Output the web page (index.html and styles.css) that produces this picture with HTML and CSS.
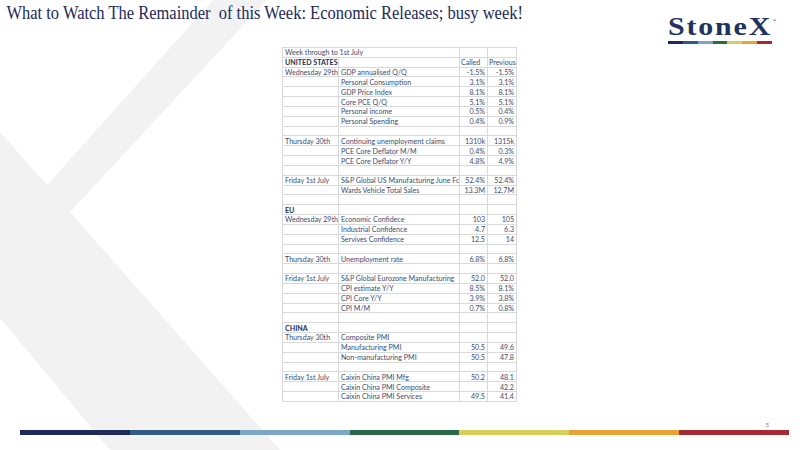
FILE: index.html
```html
<!DOCTYPE html>
<html>
<head>
<meta charset="utf-8">
<link rel="stylesheet" href="styles.css">
</head>
<body>
<div class="slide">
  <svg class="chevron" width="800" height="450" viewBox="0 0 800 450" aria-hidden="true">
    <polygon points="0,132 47,185 213,0 267,0 70,212 280,450 110,450 0,318" fill="#f2f2f2"/>
  </svg>
  <header class="header">
    <h1 class="title">What to Watch The Remainder &nbsp;of this Week: Economic Releases; busy week!</h1>
    <div class="logo">
      <div class="logo-word"><span class="logo-text">StoneX</span><span class="tm">™</span></div>
      <div class="logo-bar"><i class="c1"></i><i class="c2"></i><i class="c3"></i><i class="c4"></i><i class="c5"></i><i class="c6"></i><i class="c7"></i></div>
    </div>
  </header>
  <main class="content">
    <table class="data">
      <colgroup><col class="w1"><col class="w2"><col class="w3"><col class="w4"></colgroup>
      <tr><td colspan="2">Week through to 1st July</td><td></td><td></td></tr>
      <tr class="sec"><td>UNITED STATES</td><td></td><td class="hd">Called</td><td class="hd">Previous</td></tr>
      <tr><td>Wednesday 29th</td><td>GDP annualised Q/Q</td><td class="n">-1.5%</td><td class="n">-1.5%</td></tr>
      <tr><td></td><td>Personal Consumption</td><td class="n">3.1%</td><td class="n">3.1%</td></tr>
      <tr><td></td><td>GDP Price Index</td><td class="n">8.1%</td><td class="n">8.1%</td></tr>
      <tr><td></td><td>Core PCE Q/Q</td><td class="n">5.1%</td><td class="n">5.1%</td></tr>
      <tr><td></td><td>Personal income</td><td class="n">0.5%</td><td class="n">0.4%</td></tr>
      <tr><td></td><td>Personal Spending</td><td class="n">0.4%</td><td class="n">0.9%</td></tr>
      <tr><td></td><td></td><td></td><td></td></tr>
      <tr><td>Thursday 30th</td><td>Continuing unemployment claims</td><td class="n">1310k</td><td class="n">1315k</td></tr>
      <tr><td></td><td>PCE Core Deflator M/M</td><td class="n">0.4%</td><td class="n">0.3%</td></tr>
      <tr><td></td><td>PCE Core Deflator Y/Y</td><td class="n">4.8%</td><td class="n">4.9%</td></tr>
      <tr><td></td><td></td><td></td><td></td></tr>
      <tr><td>Friday 1st July</td><td>S&amp;P Global US Manufacturing June Fc</td><td class="n">52.4%</td><td class="n">52.4%</td></tr>
      <tr><td></td><td>Wards Vehicle Total Sales</td><td class="n">13.3M</td><td class="n">12.7M</td></tr>
      <tr><td></td><td></td><td></td><td></td></tr>
      <tr class="sec"><td>EU</td><td></td><td></td><td></td></tr>
      <tr><td>Wednesday 29th</td><td>Economic Confidece</td><td class="n">103</td><td class="n">105</td></tr>
      <tr><td></td><td>Industrial Confidence</td><td class="n">4.7</td><td class="n">6.3</td></tr>
      <tr><td></td><td>Servives Confidence</td><td class="n">12.5</td><td class="n">14</td></tr>
      <tr><td></td><td></td><td></td><td></td></tr>
      <tr><td>Thursday 30th</td><td>Unemployment rate</td><td class="n">6.8%</td><td class="n">6.8%</td></tr>
      <tr><td></td><td></td><td></td><td></td></tr>
      <tr><td>Friday 1st July</td><td>S&amp;P Global Eurozone Manufacturing</td><td class="n">52.0</td><td class="n">52.0</td></tr>
      <tr><td></td><td>CPI estimate Y/Y</td><td class="n">8.5%</td><td class="n">8.1%</td></tr>
      <tr><td></td><td>CPI Core Y/Y</td><td class="n">3.9%</td><td class="n">3.8%</td></tr>
      <tr><td></td><td>CPI M/M</td><td class="n">0.7%</td><td class="n">0.8%</td></tr>
      <tr><td></td><td></td><td></td><td></td></tr>
      <tr class="sec"><td>CHINA</td><td></td><td></td><td></td></tr>
      <tr><td>Thursday 30th</td><td>Composite PMI</td><td></td><td></td></tr>
      <tr><td></td><td>Manufacturing PMI</td><td class="n">50.5</td><td class="n">49.6</td></tr>
      <tr><td></td><td>Non-manufacturing PMI</td><td class="n">50.5</td><td class="n">47.8</td></tr>
      <tr><td></td><td></td><td></td><td></td></tr>
      <tr><td>Friday 1st July</td><td>Caixin China PMI Mfg</td><td class="n">50.2</td><td class="n">48.1</td></tr>
      <tr><td></td><td>Caixin China PMI Composite</td><td></td><td class="n">42.2</td></tr>
      <tr><td></td><td>Caixin China PMI Services</td><td class="n">49.5</td><td class="n">41.4</td></tr>
    </table>
  </main>
  <footer class="footer">
    <div class="pagenum">5</div>
    <div class="bar"><i class="c1"></i><i class="c2"></i><i class="c3"></i><i class="c4"></i><i class="c5"></i><i class="c6"></i><i class="c7"></i></div>
  </footer>
</div>
</body>
</html>
```
FILE: styles.css
```css
html, body {
  margin: 0;
  padding: 0;
  background: #ffffff;
}

.slide {
  position: relative;
  width: 800px;
  height: 450px;
  overflow: hidden;
  display: flex;
  flex-direction: column;
  background: #ffffff;
}

.chevron {
  position: absolute;
  left: 0;
  top: 0;
  z-index: 0;
}

.header, .content, .footer {
  position: relative;
  z-index: 1;
}

.header {
  height: 47px;
  display: flex;
  justify-content: space-between;
  align-items: flex-start;
}

.title {
  margin: 0;
  padding: 4px 0 0 7px;
  font-family: "Liberation Serif", "Times New Roman", serif;
  font-weight: normal;
  font-size: 18px;
  line-height: 18px;
  color: #1d2a5c;
  white-space: nowrap;
  transform: scaleX(0.916);
  transform-origin: left top;
}

.logo {
  margin: 16px 28px 0 0;
  width: 104px;
  display: flex;
  flex-direction: column;
}

.logo-word {
  position: relative;
  height: 25px;
}

.logo-text {
  display: inline-block;
  font-family: "Liberation Serif", "Times New Roman", serif;
  font-weight: bold;
  font-size: 26px;
  line-height: 26px;
  letter-spacing: 1.6px;
  color: #1e3360;
  transform: scaleX(1.15);
  transform-origin: left top;
  margin-top: -2px;
}

.tm {
  position: absolute;
  right: -4px;
  top: 2px;
  font-family: "Liberation Sans", Arial, sans-serif;
  font-size: 4px;
  color: #1e3360;
}

.logo-bar {
  display: flex;
  height: 3px;
}

.logo-bar i, .bar i {
  flex: 1;
  display: block;
}

.c1 { background: #1e2a5a; }
.c2 { background: #325a87; }
.c3 { background: #7ba6c6; }
.c4 { background: #2a6a4a; }
.c5 { background: #d8cf5a; }
.c6 { background: #e8a332; }
.c7 { background: #a72a33; }

.content {
  padding-left: 282px;
}

.data {
  border-collapse: collapse;
  table-layout: fixed;
  width: 234px;
  font-family: Lato, "Open Sans", sans-serif;
  font-size: 7.1px;
  color: #3d4b6e;
}

.w1 { width: 56px; }
.w2 { width: 121px; }
.w3 { width: 28px; }
.w4 { width: 29px; }

.data tr {
  height: 9.83px;
}

.data td {
  border: 1px solid #d9d9d9;
  padding: 1px 2px 0 2px;
  line-height: 7px;
  white-space: nowrap;
  overflow: hidden;
  vertical-align: middle;
}

.data td.n {
  text-align: right;
}

.data td.hd {
  text-align: left;
  padding-left: 1px;
}

.data .sec td:first-child {
  font-weight: bold;
  color: #1f2d55;
}

.footer {
  margin-top: auto;
  display: flex;
  flex-direction: column;
}

.pagenum {
  align-self: flex-end;
  margin-right: 31px;
  font-family: "Liberation Sans", Arial, sans-serif;
  font-size: 6px;
  line-height: 6px;
  height: 6px;
  color: #8c8c8c;
  margin-bottom: 2px;
}

.bar {
  display: flex;
  height: 5.5px;
  margin: 0 11px 15px 20px;
}
```
